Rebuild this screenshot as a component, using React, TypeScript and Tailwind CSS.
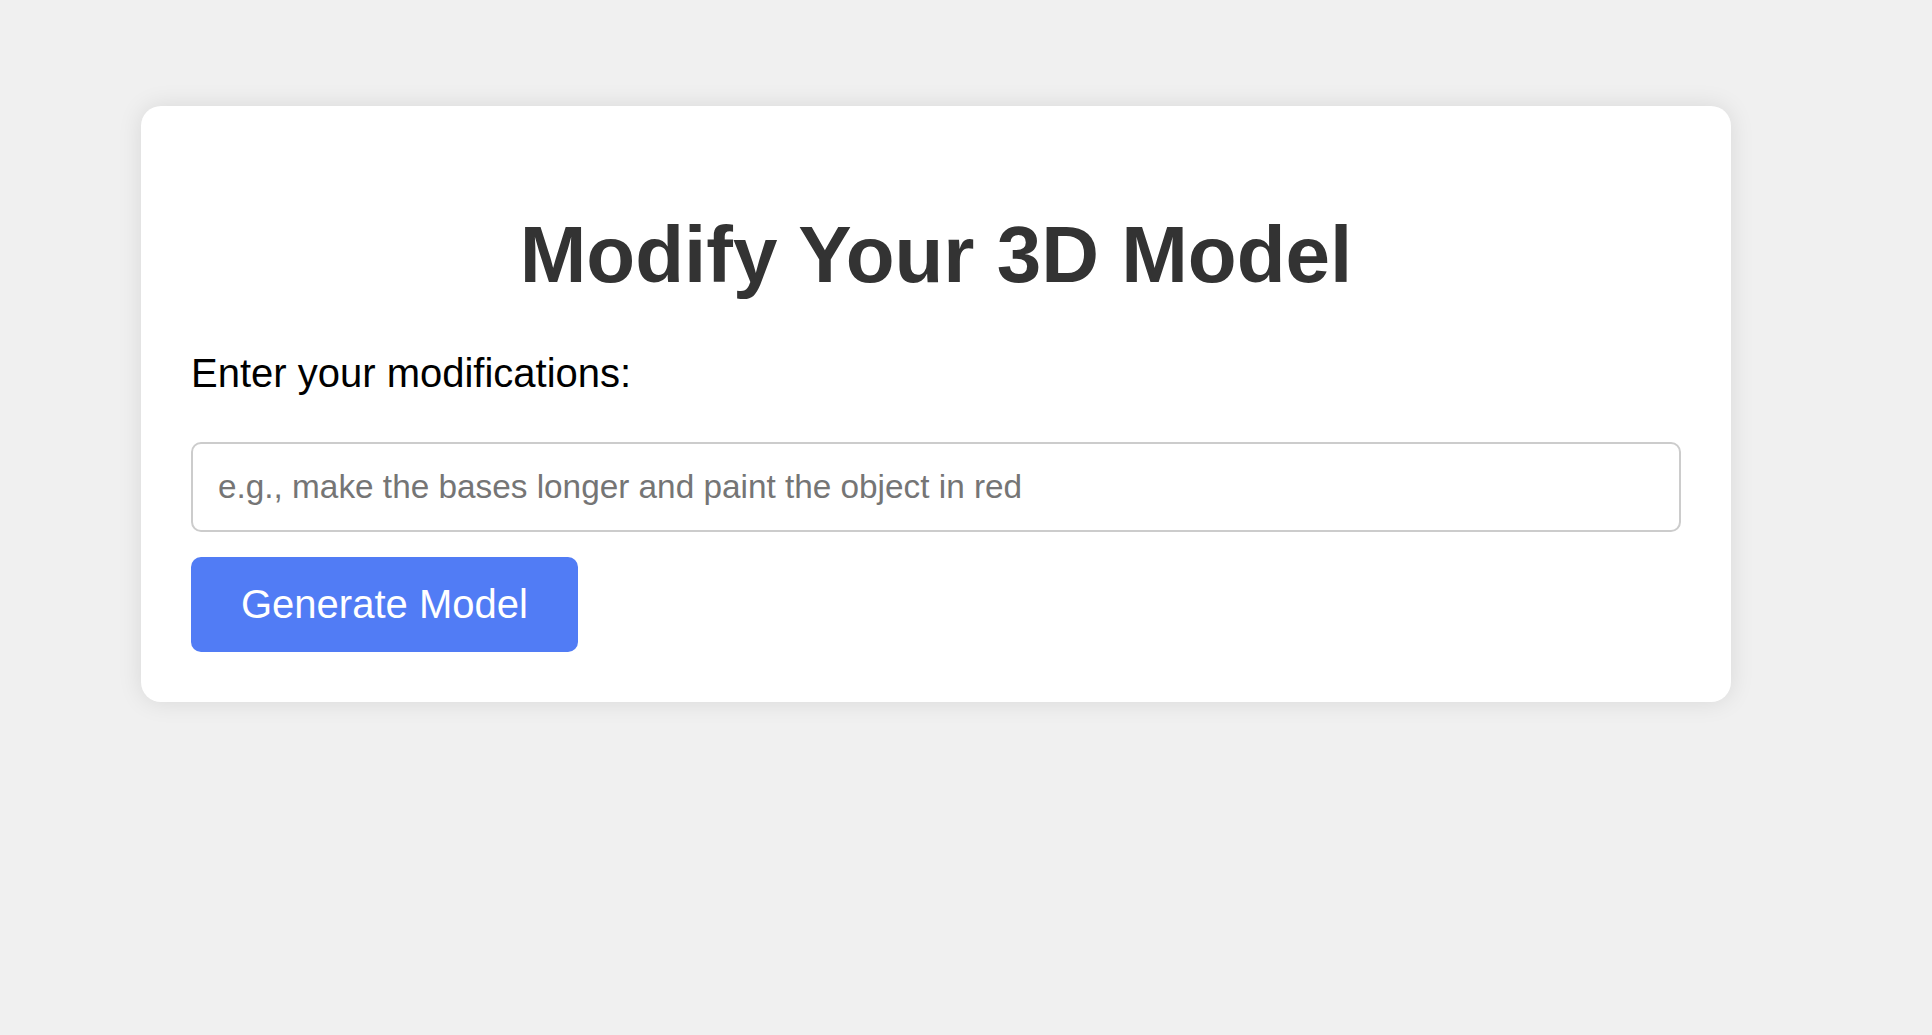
import React from "react";

export default function App() {
  return (
    <div className="min-h-screen w-full bg-[#f0f0f0] pt-[106px] pl-[141px]" style={{ fontFamily: '"Liberation Sans", Arial, sans-serif' }}>
      <div className="w-[1590px] rounded-[20px] bg-white p-[50px] shadow-[0_0_25px_rgba(0,0,0,0.1)]">
        <h1 className="mt-[53px] mb-[50px] text-center text-[80px] font-bold leading-[normal] text-[#333]">
          Modify Your 3D Model
        </h1>
        <label className="block text-[40px] leading-[normal] text-black" htmlFor="mods">
          Enter your modifications:
        </label>
        <input
          id="mods"
          type="text"
          placeholder="e.g., make the bases longer and paint the object in red"
          className="mt-[46px] block h-[90px] w-full rounded-[10px] border-[2.5px] border-[#cccccc] bg-white px-[25px] text-[33.33px] text-black outline-none placeholder:text-[#757575]"
        />
        <button className="mt-[25px] block h-[95px] rounded-[10px] bg-[#517cf5] px-[50px] text-[40px] leading-[normal] text-white">
          Generate Model
        </button>
      </div>
    </div>
  );
}
